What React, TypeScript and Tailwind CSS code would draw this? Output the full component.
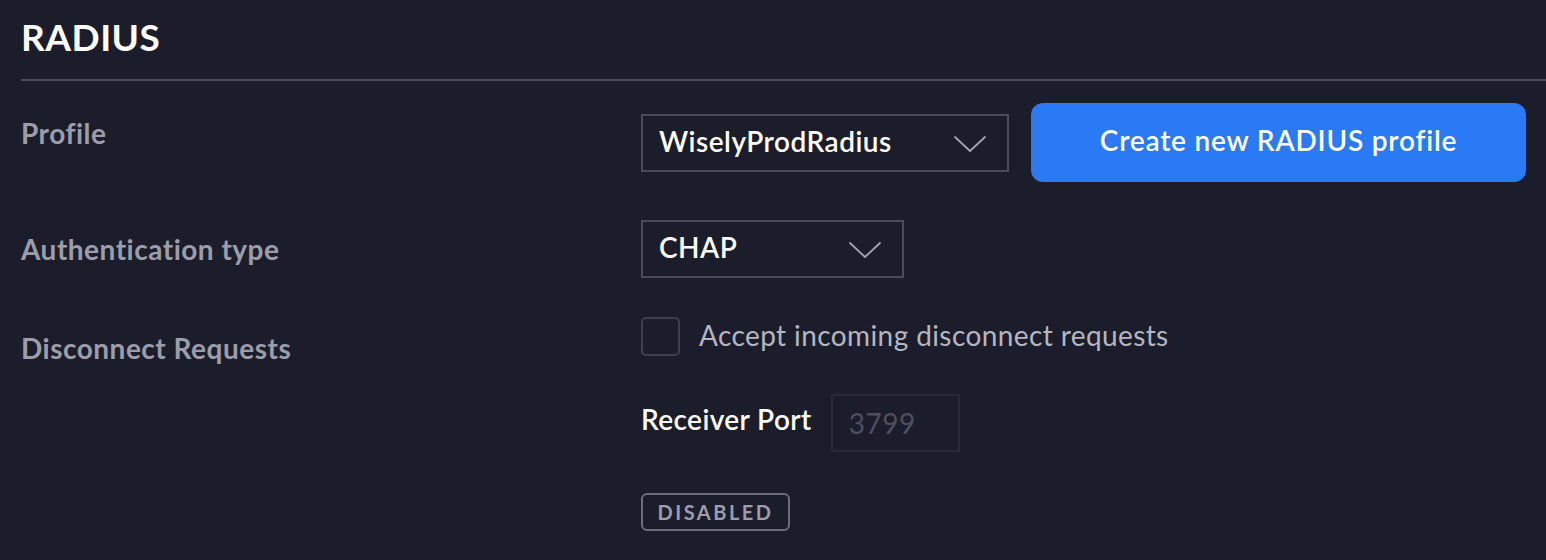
import React, { useState } from "react";

function Chevron({ className = "" }: { className?: string }) {
  return (
    <svg
      viewBox="0 0 34 18"
      className={className}
      fill="none"
      stroke="currentColor"
      strokeWidth={1.8}
      strokeLinecap="round"
      strokeLinejoin="round"
    >
      <path d="M2 2 L17 16 L32 2" />
    </svg>
  );
}

function SelectBox({ value, width }: { value: string; width: string }) {
  return (
    <div
      className={`${width} h-[58px] flex items-center justify-between border-2 border-[#4a4c5b] pl-[16px] pr-[20px] text-white font-semibold text-[28px] tracking-[0.5px]`}
    >
      <span className="pb-[4px]">{value}</span>
      <Chevron className="w-[34px] h-[18px] mt-[2px] text-[#a3a5b0]" />
    </div>
  );
}

function Label({ children, pt }: { children: React.ReactNode; pt: string }) {
  return (
    <div className={`w-[620px] shrink-0 ${pt} text-[28px] font-bold tracking-[0.5px] text-[#9b9daa]`}>
      {children}
    </div>
  );
}

export default function App() {
  const [accept, setAccept] = useState(false);

  return (
    <div
      className="w-[1546px] h-[560px] overflow-hidden bg-[#1c1d2a] pl-[21px]"
      style={{ fontFamily: "Lato, 'Noto Sans', sans-serif" }}
    >
      <div className="pt-[16px] h-[79px] text-[37px] font-bold text-white tracking-[0.5px] leading-[42px]">
        RADIUS
      </div>
      <div className="h-[2px] bg-[#494b59]" />

      {/* Profile */}
      <div className="flex mt-[22px]">
        <Label pt="pt-[9px]">Profile</Label>
        <div className="flex items-center gap-[22px]">
          <SelectBox value="WiselyProdRadius" width="w-[368px]" />
          <button className="w-[495px] h-[79px] pb-[5px] rounded-[12px] bg-[#2a79f5] text-white font-semibold text-[28px] tracking-[0.8px]">
            Create new RADIUS profile
          </button>
        </div>
      </div>

      {/* Authentication type */}
      <div className="flex mt-[38px]">
        <Label pt="pt-[8px]">Authentication type</Label>
        <SelectBox value="CHAP" width="w-[263px]" />
      </div>

      {/* Disconnect requests */}
      <div className="flex mt-[39px]">
        <Label pt="pt-[10px]">Disconnect Requests</Label>
        <div className="flex flex-col">
          <label className="flex items-center gap-[19px] h-[39px] cursor-pointer">
            <input
              type="checkbox"
              checked={accept}
              onChange={e => setAccept(e.target.checked)}
              className="appearance-none w-[39px] h-[39px] rounded-[5px] border-2 border-[#3d3f4e] bg-transparent"
            />
            <span className="pb-[3px] text-[28px] tracking-[0.4px] text-[#b4b6c0]">
              Accept incoming disconnect requests
            </span>
          </label>
          <div className="flex items-center gap-[19px] mt-[38px]">
            <span className="pb-[8px] text-[28px] font-semibold tracking-[0.4px] text-white">Receiver Port</span>
            <input
              disabled
              placeholder="3799"
              className="w-[129px] h-[58px] border-2 border-[#282a38] bg-transparent px-[16px] text-[28px] tracking-[0.5px] text-[#4d4f5e] placeholder:text-[#4d4f5e]"
            />
          </div>
          <div className="mt-[41px]">
            <span className="inline-flex items-center justify-center w-[149px] h-[38px] rounded-[6px] border-2 border-[#6b6d7a] text-[20px] font-bold tracking-[2.5px] text-[#9b9daa]">
              DISABLED
            </span>
          </div>
        </div>
      </div>
    </div>
  );
}
